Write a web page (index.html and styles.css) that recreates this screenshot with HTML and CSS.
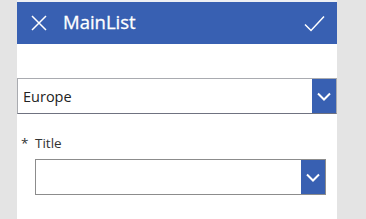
FILE: index.html
```html
<!DOCTYPE html>
<html>
<head>
<meta charset="utf-8">
<link rel="stylesheet" href="styles.css">
</head>
<body>
<div class="panel">
  <div class="header">
    <svg class="icon-x" width="16" height="16" viewBox="0 0 16 16"><path d="M1 1L15 15M15 1L1 15" stroke="#fff" stroke-width="1.5" fill="none"/></svg>
    <span class="title">MainList</span>
    <svg class="icon-check" width="21" height="17" viewBox="0 0 21 17"><path d="M1 9.5L7 15.5L20 1.5" stroke="#fff" stroke-width="1.5" fill="none"/></svg>
  </div>
  <div class="dropdown dd-region">
    <span class="dd-text">Europe</span>
    <span class="dd-btn"><svg width="14" height="9" viewBox="0 0 14 9"><path d="M1 1.5L7 7.5L13 1.5" stroke="#fff" stroke-width="2" fill="none"/></svg></span>
  </div>
  <div class="field">
    <div class="label"><span class="star">*</span><span>Title</span></div>
    <div class="dropdown dd-title">
      <span class="dd-text"></span>
      <span class="dd-btn"><svg width="14" height="9" viewBox="0 0 14 9"><path d="M1 1.5L7 7.5L13 1.5" stroke="#fff" stroke-width="2" fill="none"/></svg></span>
    </div>
  </div>
</div>
</body>
</html>
```
FILE: styles.css
```css
html, body {
  margin: 0;
  padding: 0;
}
body {
  background: #e4e4e4;
  width: 366px;
  height: 219px;
  overflow: hidden;
  font-family: "Open Sans", "Noto Sans", sans-serif;
}
.panel {
  margin-left: 17px;
  width: 320px;
  height: 219px;
  background: #fff;
  border-top: 2px solid #eef0f4;
  box-sizing: border-box;
}
.header {
  height: 42px;
  background: #3860b2;
  display: flex;
  align-items: center;
  padding: 0 12px 0 14px;
}
.icon-x {
  flex: none;
}
.title {
  color: #fff;
  font-size: 18.5px;
  font-weight: 500;
  margin-left: 16px;
  flex: 1;
  line-height: 1;
  margin-top: -1px;
  -webkit-text-stroke: 0.3px #fff;
}
.icon-check {
  flex: none;
}
.dropdown {
  display: flex;
  height: 36px;
  box-sizing: border-box;
  background: #fff;
}
.dd-region {
  margin-top: 34px;
  border: 1px solid #a9abb0;
  border-bottom-color: #6f7280;
}
.dd-text {
  flex: 1;
  font-size: 14.5px;
  color: #222;
  padding-left: 5px;
  display: flex;
  align-items: center;
  padding-top: 1px;
}
.dd-btn {
  width: 24px;
  background: #3860b2;
  display: flex;
  align-items: center;
  justify-content: center;
  flex: none;
}
.field {
  padding-top: 20px;
}
.label {
  display: flex;
  font-size: 13.5px;
  color: #333;
  line-height: 18px;
  padding-left: 4px;
}
.star {
  width: 14px;
}
.dd-title {
  margin: 7px 0 0 18px;
  width: 291px;
  border: 1px solid #8c8c8c;
}
```
